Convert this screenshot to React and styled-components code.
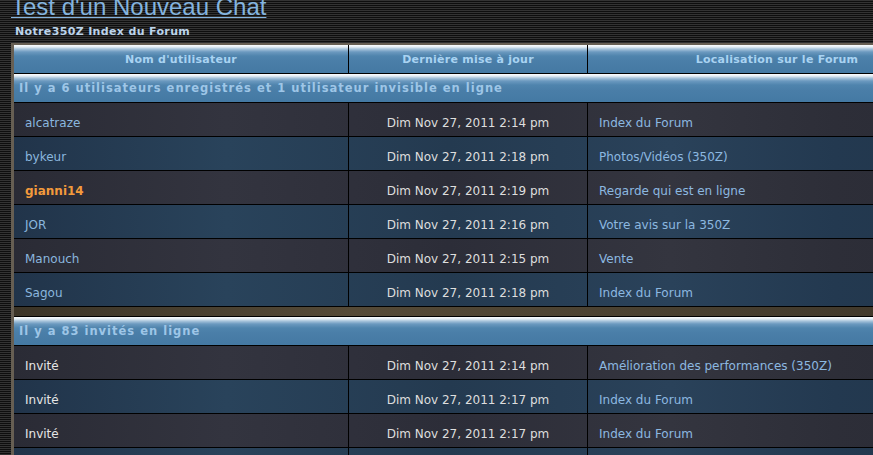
import React from "react";
import styled, { createGlobalStyle } from "styled-components";

const GlobalStyle = createGlobalStyle`
  html, body {
    margin: 0;
    padding: 0;
    overflow: hidden;
  }
  body {
    background: repeating-linear-gradient(to bottom, #333333 0px, #333333 1px, #0e0e0e 1px, #0e0e0e 2px);
    font-family: "DejaVu Sans", Verdana, sans-serif;
    height: 455px;
  }
`;

const Page = styled.div`
  display: flex;
  flex-direction: column;
  width: 980px;
`;

const Title = styled.a`
  display: block;
  margin: -5px 0 0 11px;
  font-family: "Liberation Sans", Arial, sans-serif;
  font-size: 24px;
  line-height: 24px;
  color: #84b4df;
  text-decoration: underline;
  text-decoration-thickness: 1px;
  text-underline-offset: 2px;
`;

const Crumb = styled.div`
  margin: 6px 0 0 15px;
  font-size: 11px;
  line-height: 13px;
  font-weight: bold;
  letter-spacing: 0.35px;
  color: #bcd4ea;
`;

const Table = styled.div`
  margin: 5px 0 0 11px;
  border-top: 2px solid #675f53;
  border-left: 3px solid #675f53;
  background: #000;
  display: flex;
  flex-direction: column;
  gap: 1px;
`;

const Grid = styled.div`
  display: grid;
  grid-template-columns: 334px 239px 379px;
  background: ${(p) =>
    p.$tone === "blue"
      ? "linear-gradient(90deg, #21344a 0%, #29435b 22%, #243a50 45%, #2a425a 68%, #233950 85%, #22364b 100%)"
      : p.$tone === "dark"
      ? "linear-gradient(90deg, #2a2b35 0%, #33343f 22%, #2c2d38 45%, #34353f 68%, #2d2e38 85%, #2a2b35 100%)"
      : "none"};
`;

const barGradient = `linear-gradient(to bottom, #fbfdff 0px, #e4edf4 2px, #a9c5dc 4px, #6b99bf 7px, #4f84ad 11px, #4a7ea8 16px, #4479a3 100%)`;

const HeadCell = styled.div`
  height: 28px;
  box-sizing: border-box;
  padding-top: 8px;
  text-align: center;
  font-size: 11px;
  line-height: 13px;
  font-weight: bold;
  letter-spacing: 0.25px;
  color: #a9d3f2;
  background: ${barGradient};
  border-left: ${(p) => (p.$first ? "none" : "1px solid #000")};
`;

const Section = styled.div`
  height: 28px;
  box-sizing: border-box;
  padding: 7px 0 0 5px;
  font-size: 11.5px;
  line-height: 14px;
  font-weight: bold;
  letter-spacing: 1px;
  white-space: nowrap;
  color: #9ec6e7;
  background: ${barGradient};
`;

const Cell = styled.div`
  height: 33px;
  box-sizing: border-box;
  padding: 13px 0 0 ${(p) => (p.$align === "center" ? "0" : "11px")};
  font-size: 12px;
  line-height: 14px;
  white-space: nowrap;
  text-align: ${(p) => p.$align || "left"};
  border-left: ${(p) => (p.$first ? "none" : "1px solid #000")};
  color: ${(p) =>
    p.$kind === "user"
      ? "#8ab6de"
      : p.$kind === "mod"
      ? "#f39a3c"
      : p.$kind === "guest"
      ? "#e6e6e6"
      : p.$kind === "date"
      ? "#dedede"
      : "#8cb8e0"};
  font-weight: ${(p) => (p.$kind === "mod" ? "bold" : "normal")};
`;

const Spacer = styled.div`
  height: 9px;
  background: linear-gradient(90deg, #3b3427 0%, #554a37 35%, #4a4131 65%, #3e3629 100%);
`;

const users = [
  ["alcatraze", "user", "Dim Nov 27, 2011 2:14 pm", "Index du Forum"],
  ["bykeur", "user", "Dim Nov 27, 2011 2:18 pm", "Photos/Vidéos (350Z)"],
  ["gianni14", "mod", "Dim Nov 27, 2011 2:19 pm", "Regarde qui est en ligne"],
  ["JOR", "user", "Dim Nov 27, 2011 2:16 pm", "Votre avis sur la 350Z"],
  ["Manouch", "user", "Dim Nov 27, 2011 2:15 pm", "Vente"],
  ["Sagou", "user", "Dim Nov 27, 2011 2:18 pm", "Index du Forum"],
];

const guests = [
  ["Invité", "guest", "Dim Nov 27, 2011 2:14 pm", "Amélioration des performances (350Z)"],
  ["Invité", "guest", "Dim Nov 27, 2011 2:17 pm", "Index du Forum"],
  ["Invité", "guest", "Dim Nov 27, 2011 2:17 pm", "Index du Forum"],
  ["", "guest", "", ""],
];

function DataRow({ row, index }) {
  const [name, kind, date, loc] = row;
  return (
    <Grid $tone={index % 2 === 0 ? "dark" : "blue"}>
      <Cell $first $kind={kind}>{name}</Cell>
      <Cell $align="center" $kind="date">{date}</Cell>
      <Cell $kind="loc">{loc}</Cell>
    </Grid>
  );
}

export default function App() {
  return (
    <>
      <GlobalStyle />
      <Page>
        <Title href="#">Test d'un Nouveau Chat</Title>
        <Crumb>Notre350Z Index du Forum</Crumb>
        <Table>
          <Grid>
            <HeadCell $first>Nom d'utilisateur</HeadCell>
            <HeadCell>Dernière mise à jour</HeadCell>
            <HeadCell>Localisation sur le Forum</HeadCell>
          </Grid>
          <Section>Il y a 6 utilisateurs enregistrés et 1 utilisateur invisible en ligne</Section>
          {users.map((r, i) => (
            <DataRow key={"u" + i} row={r} index={i} />
          ))}
          <Spacer />
          <Section>Il y a 83 invités en ligne</Section>
          {guests.map((r, i) => (
            <DataRow key={"g" + i} row={r} index={i} />
          ))}
        </Table>
      </Page>
    </>
  );
}
